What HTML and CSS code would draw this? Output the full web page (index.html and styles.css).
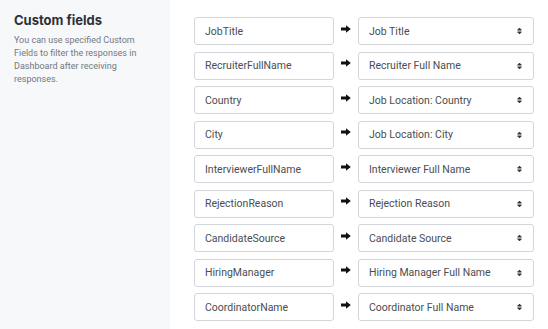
FILE: index.html
```html
<!DOCTYPE html>
<html lang="en">
<head>
    <meta charset="UTF-8">
    <title>Custom fields</title>
    <link rel="stylesheet" href="styles.css">
</head>
<body>
    <div class="page">
        <div class="sidebar">
            <h2>Custom fields</h2>
            <p>You can use specified Custom Fields to filter the responses in Dashboard after receiving responses.</p>
        </div>
        <div class="fields">
            <div class="field-row">
                <div class="field-input">JobTitle</div>
                <svg class="arrow" viewBox="0 0 10 8"><path d="M0 2.6H5V0.2L9.8 4L5 7.8V5.4H0Z"/></svg>
                <div class="field-select">Job Title<svg class="sort" viewBox="0 0 320 512"><path d="M41 288h238c21.4 0 32.1 25.9 17 41L177 448c-9.4 9.4-24.6 9.4-33.9 0L24 329c-15.1-15.1-4.4-41 17-41zm255-105L177 64c-9.4-9.4-24.6-9.4-33.9 0L24 183c-15.1 15.1-4.4 41 17 41h238c21.4 0 32.1-25.9 17-41z"/></svg></div>
            </div>
            <div class="field-row">
                <div class="field-input">RecruiterFullName</div>
                <svg class="arrow" viewBox="0 0 10 8"><path d="M0 2.6H5V0.2L9.8 4L5 7.8V5.4H0Z"/></svg>
                <div class="field-select">Recruiter Full Name<svg class="sort" viewBox="0 0 320 512"><path d="M41 288h238c21.4 0 32.1 25.9 17 41L177 448c-9.4 9.4-24.6 9.4-33.9 0L24 329c-15.1-15.1-4.4-41 17-41zm255-105L177 64c-9.4-9.4-24.6-9.4-33.9 0L24 183c-15.1 15.1-4.4 41 17 41h238c21.4 0 32.1-25.9 17-41z"/></svg></div>
            </div>
            <div class="field-row">
                <div class="field-input">Country</div>
                <svg class="arrow" viewBox="0 0 10 8"><path d="M0 2.6H5V0.2L9.8 4L5 7.8V5.4H0Z"/></svg>
                <div class="field-select">Job Location: Country<svg class="sort" viewBox="0 0 320 512"><path d="M41 288h238c21.4 0 32.1 25.9 17 41L177 448c-9.4 9.4-24.6 9.4-33.9 0L24 329c-15.1-15.1-4.4-41 17-41zm255-105L177 64c-9.4-9.4-24.6-9.4-33.9 0L24 183c-15.1 15.1-4.4 41 17 41h238c21.4 0 32.1-25.9 17-41z"/></svg></div>
            </div>
            <div class="field-row">
                <div class="field-input">City</div>
                <svg class="arrow" viewBox="0 0 10 8"><path d="M0 2.6H5V0.2L9.8 4L5 7.8V5.4H0Z"/></svg>
                <div class="field-select">Job Location: City<svg class="sort" viewBox="0 0 320 512"><path d="M41 288h238c21.4 0 32.1 25.9 17 41L177 448c-9.4 9.4-24.6 9.4-33.9 0L24 329c-15.1-15.1-4.4-41 17-41zm255-105L177 64c-9.4-9.4-24.6-9.4-33.9 0L24 183c-15.1 15.1-4.4 41 17 41h238c21.4 0 32.1-25.9 17-41z"/></svg></div>
            </div>
            <div class="field-row">
                <div class="field-input">InterviewerFullName</div>
                <svg class="arrow" viewBox="0 0 10 8"><path d="M0 2.6H5V0.2L9.8 4L5 7.8V5.4H0Z"/></svg>
                <div class="field-select">Interviewer Full Name<svg class="sort" viewBox="0 0 320 512"><path d="M41 288h238c21.4 0 32.1 25.9 17 41L177 448c-9.4 9.4-24.6 9.4-33.9 0L24 329c-15.1-15.1-4.4-41 17-41zm255-105L177 64c-9.4-9.4-24.6-9.4-33.9 0L24 183c-15.1 15.1-4.4 41 17 41h238c21.4 0 32.1-25.9 17-41z"/></svg></div>
            </div>
            <div class="field-row">
                <div class="field-input">RejectionReason</div>
                <svg class="arrow" viewBox="0 0 10 8"><path d="M0 2.6H5V0.2L9.8 4L5 7.8V5.4H0Z"/></svg>
                <div class="field-select">Rejection Reason<svg class="sort" viewBox="0 0 320 512"><path d="M41 288h238c21.4 0 32.1 25.9 17 41L177 448c-9.4 9.4-24.6 9.4-33.9 0L24 329c-15.1-15.1-4.4-41 17-41zm255-105L177 64c-9.4-9.4-24.6-9.4-33.9 0L24 183c-15.1 15.1-4.4 41 17 41h238c21.4 0 32.1-25.9 17-41z"/></svg></div>
            </div>
            <div class="field-row">
                <div class="field-input">CandidateSource</div>
                <svg class="arrow" viewBox="0 0 10 8"><path d="M0 2.6H5V0.2L9.8 4L5 7.8V5.4H0Z"/></svg>
                <div class="field-select">Candidate Source<svg class="sort" viewBox="0 0 320 512"><path d="M41 288h238c21.4 0 32.1 25.9 17 41L177 448c-9.4 9.4-24.6 9.4-33.9 0L24 329c-15.1-15.1-4.4-41 17-41zm255-105L177 64c-9.4-9.4-24.6-9.4-33.9 0L24 183c-15.1 15.1-4.4 41 17 41h238c21.4 0 32.1-25.9 17-41z"/></svg></div>
            </div>
            <div class="field-row">
                <div class="field-input">HiringManager</div>
                <svg class="arrow" viewBox="0 0 10 8"><path d="M0 2.6H5V0.2L9.8 4L5 7.8V5.4H0Z"/></svg>
                <div class="field-select">Hiring Manager Full Name<svg class="sort" viewBox="0 0 320 512"><path d="M41 288h238c21.4 0 32.1 25.9 17 41L177 448c-9.4 9.4-24.6 9.4-33.9 0L24 329c-15.1-15.1-4.4-41 17-41zm255-105L177 64c-9.4-9.4-24.6-9.4-33.9 0L24 183c-15.1 15.1-4.4 41 17 41h238c21.4 0 32.1-25.9 17-41z"/></svg></div>
            </div>
            <div class="field-row">
                <div class="field-input">CoordinatorName</div>
                <svg class="arrow" viewBox="0 0 10 8"><path d="M0 2.6H5V0.2L9.8 4L5 7.8V5.4H0Z"/></svg>
                <div class="field-select">Coordinator Full Name<svg class="sort" viewBox="0 0 320 512"><path d="M41 288h238c21.4 0 32.1 25.9 17 41L177 448c-9.4 9.4-24.6 9.4-33.9 0L24 329c-15.1-15.1-4.4-41 17-41zm255-105L177 64c-9.4-9.4-24.6-9.4-33.9 0L24 183c-15.1 15.1-4.4 41 17 41h238c21.4 0 32.1-25.9 17-41z"/></svg></div>
            </div>
        </div>
    </div>
</body>
</html>
```

FILE: styles.css
```css
body {
    margin: 0;
    font-family: Roboto, "Liberation Sans", sans-serif;
    color: #333;
    background: #fff;
}
.page {
    display: flex;
    height: 329px;
    overflow: hidden;
}
.sidebar {
    width: 170px;
    flex-shrink: 0;
    background: #f7f8fa;
    padding: 12px 10px 0 14px;
    box-sizing: border-box;
}
.sidebar h2 {
    margin: 0 0 5px;
    font-family: Inter, "Open Sans", sans-serif;
    font-weight: 700;
    font-size: 13px;
    line-height: 17px;
    color: #2e3038;
}
.sidebar p {
    margin: 0;
    font-size: 9px;
    line-height: 13px;
    color: #737780;
}
.fields {
    padding: 17px 0 0 24px;
    display: flex;
    flex-direction: column;
    gap: 6.5px;
}
.field-row {
    display: flex;
    align-items: center;
    height: 28px;
}
.field-input, .field-select {
    height: 28px;
    box-sizing: border-box;
    border: 1px solid #d3d6db;
    border-radius: 3px;
    font-size: 10.5px;
    color: #4a4d52;
    display: flex;
    align-items: center;
    padding-left: 10px;
}
.field-input {
    width: 140px;
}
.arrow {
    width: 10px;
    height: 8px;
    margin: -5px 7px 0 7px;
    fill: #111;
}
.field-select {
    width: 176px;
    justify-content: space-between;
    padding-right: 11px;
}
.sort {
    width: 5px;
    height: 8px;
    fill: #333;
}
```
